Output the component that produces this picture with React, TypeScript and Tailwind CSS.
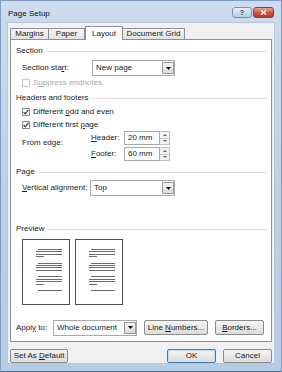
import React from 'react';

const U: React.FC<{ children: React.ReactNode }> = ({ children }) => (
  <span className="underline underline-offset-1">{children}</span>
);

const Heading: React.FC<{ label: string; className?: string }> = ({ label, className = '' }) => (
  <div className={`flex items-center h-[12px] pl-[5px] pr-[4px] ${className}`}>
    <span className="text-[#222]">{label}</span>
    <div className="flex-1 h-px bg-[#e2e2e2] ml-[3px]" />
  </div>
);

const Check: React.FC<{ checked?: boolean; disabled?: boolean; children: React.ReactNode; className?: string }> = ({
  checked = false,
  disabled = false,
  children,
  className = '',
}) => (
  <div className={`flex items-center h-[12px] pl-[11px] ${className}`}>
    <div
      className={`w-[8px] h-[8px] border bg-white flex items-center justify-center ${
        disabled ? 'border-[#c8c8c8]' : 'border-[#8a8a8a]'
      }`}
    >
      {checked && (
        <svg width="6" height="6" viewBox="0 0 6 6">
          <path d="M0.6 3.2 L2.3 4.8 L5.4 0.8" stroke="#2d3a4d" strokeWidth="1.2" fill="none" />
        </svg>
      )}
    </div>
    <span className={`ml-[3px] ${disabled ? 'text-[#a8a8a8]' : 'text-[#1a1a1a]'}`}>{children}</span>
  </div>
);

const Select: React.FC<{ value: string; className: string }> = ({ value, className }) => (
  <div className={`flex items-center h-[16px] border border-[#a9a9a9] bg-white ${className}`}>
    <span className="flex-1 pl-[3px] text-[#1a1a1a]">{value}</span>
    <div className="w-[12px] h-[calc(100%-2px)] border border-[#9a9a9a] bg-gradient-to-b from-[#f4f4f4] to-[#d9d9d9] flex items-center justify-center">
      <svg width="5" height="3" viewBox="0 0 5 3">
        <path d="M0 0 H5 L2.5 3 Z" fill="#111" />
      </svg>
    </div>
  </div>
);

const Spin: React.FC<{ value: string }> = ({ value }) => (
  <div className="flex h-[14px]">
    <div className="w-[36px] h-full border border-[#a9a9a9] bg-white flex items-center pl-[3px] text-[#1a1a1a]">
      {value}
    </div>
    <div className="w-[10px] h-full flex flex-col border border-l-0 border-[#c2c2c2] bg-[#f2f2f2]">
      <div className="flex-1 flex items-center justify-center border-b border-[#c8c8c8]">
        <svg width="4" height="2" viewBox="0 0 4 2">
          <path d="M0 2 H4 L2 0 Z" fill="#666" />
        </svg>
      </div>
      <div className="flex-1 flex items-center justify-center">
        <svg width="4" height="2" viewBox="0 0 4 2">
          <path d="M0 0 H4 L2 2 Z" fill="#666" />
        </svg>
      </div>
    </div>
  </div>
);

const Btn: React.FC<{ children: React.ReactNode; className: string; primary?: boolean }> = ({
  children,
  className,
  primary = false,
}) => (
  <div
    className={`flex items-center justify-center rounded-[2px] border bg-gradient-to-b from-[#f3f3f3] to-[#dcdcdc] text-[#1a1a1a] ${
      primary ? 'border-[#3d7bad] shadow-[inset_0_0_0_1px_#bfe0f5]' : 'border-[#8a8a8a]'
    } ${className}`}
  >
    <span>{children}</span>
  </div>
);

const PreviewPage: React.FC = () => {
  const group = (last: string) => (
    <div className="flex flex-col gap-[1.4px]">
      <div className="h-px w-[24px] ml-[2px] bg-[#6a6a6a]" />
      <div className="h-px w-[26px] bg-[#6a6a6a]" />
      <div className="h-px w-[26px] bg-[#6a6a6a]" />
      <div className={`h-px ${last} bg-[#6a6a6a]`} />
    </div>
  );
  return (
    <div className="w-[48px] h-[66px] border border-[#505050] bg-white pt-[9px] pl-[13px] flex flex-col gap-[5.5px]">
      {group('w-[8px]')}
      {group('w-[26px]')}
      {group('w-[8px]')}
      <div className="h-px w-[24px] ml-[2px] bg-[#6a6a6a]" />
    </div>
  );
};

export default function App() {
  return (
    <div className="w-[282px] h-[372px] flex flex-col bg-gradient-to-b from-[#cddcee] via-[#bdd1e8] to-[#b6cbe4] border border-[#7f9cc0] border-b-[#4b6c95] text-[8px] leading-none font-['Liberation_Sans',Arial,sans-serif] select-none overflow-hidden">
      {/* Title bar */}
      <div className="h-[21px] flex items-center pl-[7px] pr-[7px] shrink-0">
        <span className="text-[#111] mt-[4px]">Page Setup</span>
        <div className="ml-auto flex gap-[1px] mt-[1px]">
          <div className="w-[20px] h-[11px] rounded-[3px] border border-[#7a93b4] bg-gradient-to-b from-[#e6eef8] to-[#b8cbe2] flex items-center justify-center text-[7px] font-bold text-[#2c3e57]">
            ?
          </div>
          <div className="w-[21px] h-[11px] rounded-[3px] border border-[#8c3a30] bg-gradient-to-b from-[#e9a497] via-[#cf5a47] to-[#b63a28] flex items-center justify-center">
            <svg width="7" height="5" viewBox="0 0 7 5">
              <path d="M1 0.5 L6 4.5 M6 0.5 L1 4.5" stroke="white" strokeWidth="1.4" />
            </svg>
          </div>
        </div>
      </div>

      {/* Dialog body */}
      <div className="mx-[6px] flex-1 mb-[8px] bg-[#f0f0f0] border border-[#b4c7de] pt-[3px] px-[2px] flex flex-col">
        {/* Tabs */}
        <div className="flex h-[13px] items-end relative z-10">
          <div className="w-[39px] h-[11px] border border-b-0 border-[#8e8f94] bg-gradient-to-b from-[#f5f5f5] to-[#e2e2e2] flex items-center justify-center text-[#1a1a1a]">
            Margins
          </div>
          <div className="w-[36px] h-[11px] border border-b-0 border-l-0 border-[#8e8f94] bg-gradient-to-b from-[#f5f5f5] to-[#e2e2e2] flex items-center justify-center text-[#1a1a1a]">
            Paper
          </div>
          <div className="w-[38px] h-[14px] -mb-px border border-b-0 border-[#8e8f94] bg-white flex items-center justify-center text-[#1a1a1a]">
            Layout
          </div>
          <div className="w-[62px] h-[11px] border border-b-0 border-l-0 border-[#8e8f94] bg-gradient-to-b from-[#f5f5f5] to-[#e2e2e2] flex items-center justify-center text-[#1a1a1a]">
            Document Grid
          </div>
        </div>

        {/* Tab panel */}
        <div className="h-[303px] border border-[#8e8f94] bg-white flex flex-col pt-[5px]">
          <Heading label="Section" />
          <div className="flex items-center h-[16px] mt-[3px] pl-[11px]">
            <span className="w-[70px] text-[#1a1a1a]">
              Section sta<U>r</U>t:
            </span>
            <Select value="New page" className="w-[83px]" />
          </div>
          <Check disabled className="mt-[1px]">
            S<U>u</U>ppress endnotes
          </Check>

          <Heading label="Headers and footers" className="mt-[3px]" />
          <Check checked className="mt-[2px]">
            Different <U>o</U>dd and even
          </Check>
          <Check checked className="mt-[1px]">
            Different first <U>p</U>age
          </Check>
          <div className="flex pl-[11px]">
            <div className="w-[69px] flex items-center pb-[6px] text-[#1a1a1a]">From edge:</div>
            <div className="flex flex-col gap-[2px]">
              <div className="flex items-center">
                <span className="w-[33px] text-[#1a1a1a]">
                  <U>H</U>eader:
                </span>
                <Spin value="20 mm" />
              </div>
              <div className="flex items-center">
                <span className="w-[33px] text-[#1a1a1a]">
                  <U>F</U>ooter:
                </span>
                <Spin value="60 mm" />
              </div>
            </div>
          </div>

          <Heading label="Page" className="mt-[5px]" />
          <div className="flex items-center h-[16px] mt-[2px] pl-[11px]">
            <span className="w-[68px] text-[#1a1a1a]">
              <U>V</U>ertical alignment:
            </span>
            <Select value="Top" className="w-[85px]" />
          </div>

          <Heading label="Preview" className="mt-[27px]" />
          <div className="flex gap-[5px] mt-[4px] pl-[11px]">
            <PreviewPage />
            <PreviewPage />
          </div>

          <div className="flex items-center h-[15px] mt-[15px] pl-[5px]">
            <span className="w-[37px] text-[#1a1a1a]">
              Appl<U>y</U> to:
            </span>
            <Select value="Whole document" className="w-[84px] h-[15px]" />
            <Btn className="w-[64px] h-[15px] ml-[7px]">
              Line <U>N</U>umbers...
            </Btn>
            <Btn className="w-[49px] h-[15px] ml-[7px]">
              <U>B</U>orders...
            </Btn>
          </div>
        </div>

        {/* Bottom buttons */}
        <div className="flex items-center h-[14px] mt-[7px]">
          <Btn className="w-[58px] h-[14px]">
            Set As <U>D</U>efault
          </Btn>
          <Btn primary className="w-[49px] h-[14px] ml-auto">
            OK
          </Btn>
          <Btn className="w-[49px] h-[14px] ml-[7px]">Cancel</Btn>
        </div>
      </div>
    </div>
  );
}
